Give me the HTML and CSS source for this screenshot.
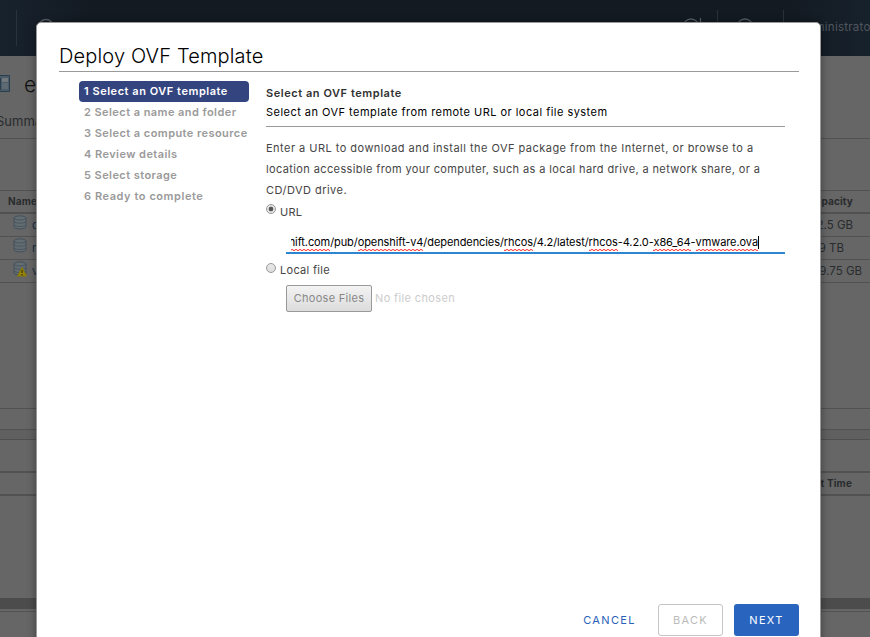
FILE: index.html
```html
<!DOCTYPE html>
<html lang="en">
<head>
<meta charset="utf-8">
<title>Deploy OVF Template</title>
<link rel="stylesheet" href="styles.css">
</head>
<body>
<svg class="defs" width="0" height="0" aria-hidden="true">
  <symbol id="datastore" viewBox="0 0 14 15"><path d="M1 3v9c0 2.500 12 2.500 12 0V3C13 .2 1 .2 1 3" fill="#636c71" stroke="#42515a"/><path d="M1 3c0 2.600 12 2.600 12 0M1.500 6.500c0 2.300 11 2.300 11 0M1.500 9.800c0 2.300 11 2.300 11 0" fill="none" stroke="#42515a" stroke-width=".8"/></symbol>
</svg>
<main class="client">
  <header class="topbar">
    <i class="divider d1"></i>
    <svg class="search" width="18" height="18"><circle cx="9" cy="9" r="7.5"/></svg>
    <svg class="refresh" width="20" height="18"><circle cx="9" cy="9" r="8"/><path d="M18.5 0v7"/></svg>
    <i class="divider d2"></i>
    <svg class="help" width="18" height="18"><circle cx="9" cy="9" r="8"/></svg>
    <i class="divider d3"></i>
    <span class="user">Administrator</span>
  </header>
  <section class="object">
    <div class="heading"><svg width="10" height="17"><path d="M0 .5h9.500v16H0" fill="#4b5c68" stroke="#2a3f4e"/><path d="M0 3h1v12H0z" fill="#2a3f4e"/><path d="M2 3h6v4H2z" fill="#71797d"/><path d="M2 8h6v6H2z" fill="#5e6a72"/></svg><span>esxi</span></div>
    <div class="tabs">Summary</div>
  </section>
  <div class="toolbar"></div>
  <div class="thead"><b>Name</b><b class="right r0">Capacity</b></div>
  <div class="row"><svg width="14" height="15"><use href="#datastore"/></svg><a>datastore</a><span class="right r1">12.5 GB</span></div>
  <div class="row"><svg width="14" height="15"><use href="#datastore"/></svg><a>nfs</a><span class="right r2">19 TB</span></div>
  <div class="row"><svg width="14" height="16"><use href="#datastore" width="14" height="15"/><path d="M9 6.500l4.500 8.500h-9z" fill="#968509" stroke="#857707"/><path d="M9 9v3m0 1v1.500" stroke="#29290f"/></svg><a>vm</a><span class="right r3">499.75 GB</span></div>
  <div class="blank"></div>
  <div class="gridfoot"></div>
  <div class="splitter"></div>
  <div class="tasks"></div>
  <div class="thead second"><b class="right r4">Start Time</b></div>
  <div class="taskbody"></div>
  <div class="scroll"></div>
  <div class="lastrow"></div>
</main>

<div class="modal" role="dialog">
  <h1>Deploy OVF Template</h1>
  <div class="content">
    <ol class="steps">
      <li class="active">1 Select an OVF template</li>
      <li>2 Select a name and folder</li>
      <li>3 Select a compute resource</li>
      <li>4 Review details</li>
      <li>5 Select storage</li>
      <li>6 Ready to complete</li>
    </ol>
    <section class="page">
      <h2>Select an OVF template</h2>
      <p class="sub">Select an OVF template from remote URL or local file system</p>
      <p class="intro">Enter a URL to download and install the OVF package from the Internet, or browse to a<br><span class="tight">location accessible from your computer, such as a local hard drive, a network share, or a</span><br>CD/DVD drive.</p>
      <div class="option"><i class="radio checked"></i><span>URL</span></div>
      <div class="url"><div class="value"><span><u>nshift.com</u>/pub/<u>openshift-v4</u>/dependencies/<u>rhcos</u>/4.2/latest/<u>rhcos</u>-4.2.0-<u>x86_64</u>-<u>vmware.ova</u></span></div></div>
      <div class="option local"><i class="radio"></i><span>Local file</span></div>
      <div class="file"><button>Choose Files</button><span>No file chosen</span></div>
    </section>
  </div>
  <footer><button class="cancel">CANCEL</button><button class="back">BACK</button><button class="next">NEXT</button></footer>
</div>
</body>
</html>
```

FILE: styles.css
```css
* { box-sizing: border-box; }
body { margin: 0; width: 870px; height: 637px; overflow: hidden; position: relative; background: #666; font: 11px/21px Inter, "Liberation Sans", sans-serif; }
button { font-family: inherit; }
.defs { position: absolute; }

.client { height: 637px; overflow: hidden; color: #292c2e; }
.topbar { height: 56px; background: linear-gradient(90deg, #18222d, #131a22 90px, #131a22 790px, #17212c); position: relative; }
.topbar > * { position: absolute; }
.topbar svg { fill: none; stroke: #555c63; stroke-width: 1.3; }
.divider { top: 10px; width: 1px; height: 36px; background: #28323c; }
.d1 { left: 16px; } .d2 { left: 717px; } .d3 { left: 783px; }
.search { left: 37px; top: 18px; }
.refresh { left: 682px; top: 18px; }
.help { left: 736px; top: 18px; }
.user { left: 799px; top: 17px; font-size: 11.5px; letter-spacing: .25px; color: #50575e; }
.object { height: 83px; border-bottom: 1px solid #515151; padding-top: 18px; }
.heading { display: flex; height: 22px; gap: 14px; font: 300 21px/22px Inter, sans-serif; color: #101010; }
.heading svg { margin-top: 1px; }
.tabs { margin: 13px 0 0 -4px; font-size: 13px; line-height: 24px; }
.toolbar { height: 51px; }
.thead { height: 24px; border-top: 1px solid #515151; border-bottom: 2px solid #515151; position: relative; font-size: 10px; padding-left: 8px; letter-spacing: .15px; }
.row { height: 23px; border-bottom: 1px solid #515151; position: relative; display: flex; align-items: flex-start; padding: 1px 0 0 13px; gap: 5px; font-size: 11.5px; }
.row a { color: #172e48; line-height: 21px; }
.right { position: absolute; top: 0; white-space: nowrap; }
.row .right { top: 1px; }
.r0 { right: 17px; } .r1 { right: 17px; } .r2 { right: 26px; } .r3 { right: 8px; } .r4 { right: 18px; }
.blank { height: 126px; border-bottom: 1px solid #515151; }
.gridfoot { height: 21px; border-bottom: 1px solid #515151; }
.splitter { height: 10px; background: #606060; border-bottom: 1px solid #4f4f4f; }
.tasks { height: 31px; }
.thead.second { height: 25px; border-top-width: 2px; }
.taskbody { height: 102px; }
.scroll { height: 11px; background: #4c4c4c; }
.lastrow { height: 3px; border-bottom: 1px solid #535353; }

.modal { position: absolute; left: 36px; top: 22px; width: 785px; height: 640px; border: 1px solid #999; border-radius: 5px; background: #fff; box-shadow: 0 1px 8px rgba(0,0,0,.4); padding: 20px 21px 0 22px; }
h1 { margin: 0; height: 29px; border-bottom: 1px solid #9a9a9a; font-size: 20px; line-height: 27px; font-weight: 300; color: #000; letter-spacing: .15px; }
.content { display: flex; height: 532px; padding: 9px 14px 0 20px; gap: 17px; }
.steps { width: 170px; margin: 0; padding: 0; list-style: none; font-weight: 600; color: #9a9a9a; white-space: nowrap; letter-spacing: .44px; }
.steps li { height: 21px; padding-left: 5px; line-height: 21px; border-radius: 4px; }
.steps li:last-child { letter-spacing: .56px; }
.steps .active { background: #34447f; color: #fff; letter-spacing: .53px; }
.page { width: 519px; color: #454545; letter-spacing: .47px; }
h2 { margin: 3px 0 0; font-size: 11px; line-height: 18px; font-weight: 600; color: #313131; letter-spacing: .55px; }
p { margin: 0; white-space: nowrap; }
.sub { height: 25px; line-height: 20px; color: #000; border-bottom: 1px solid #999; }
.intro { margin-top: 11px; }
.tight { letter-spacing: .38px; }
.option { display: flex; gap: 4px; height: 22px; letter-spacing: .3px; }
.option span { line-height: 23px; }
.radio { width: 10px; height: 10px; margin-top: 3px; border: 1px solid #999; border-radius: 50%; background: linear-gradient(#e8e8e8, #ddd); }
.radio.checked { background: radial-gradient(circle, #555 0 2px, #e6e6e6 2.7px); }
.url { margin-left: 20px; height: 31px; border-bottom: 2px solid #2e86d0; padding: 9px 26px 0 5px; letter-spacing: -.08px; }
.value { height: 19px; overflow: hidden; display: flex; justify-content: flex-end; color: #000; }
.value span { border-right: 1px solid #000; white-space: nowrap; height: 13px; line-height: 13px; margin-top: 4px; }
.value u { text-decoration: none; padding-bottom: 2px; background: conic-gradient(#ff5050 25%, #ffd8d8 0 50%, #ff5050 0 75%, #ffd8d8 0) 0 100%/4px 2px repeat-x; }
.local { margin-top: 5px; height: 26px; }
.local .radio { margin-top: 4px; }
.file { margin-left: 20px; display: flex; align-items: center; gap: 3px; color: #ccc; letter-spacing: .36px; }
.file button { width: 86px; height: 27px; border: 1px solid #999; border-radius: 2px; padding: 0 0 1px; font-size: 11px; letter-spacing: .3px; color: #888; background: linear-gradient(#f3f3f3, #dcdcdc); }
footer { display: flex; justify-content: flex-end; height: 32px; }
footer button { height: 32px; width: 65px; border-radius: 3px; font-size: 11px; letter-spacing: 1.35px; padding: 0; border: 1px solid transparent; background: #fff; }
.cancel { width: 75px; color: #2862b8; margin-right: 11px; }
.back { border-color: #c5c5c5; color: #bbb; margin-right: 11px; }
footer .next { color: #fff; background: #2964bf; }
```
